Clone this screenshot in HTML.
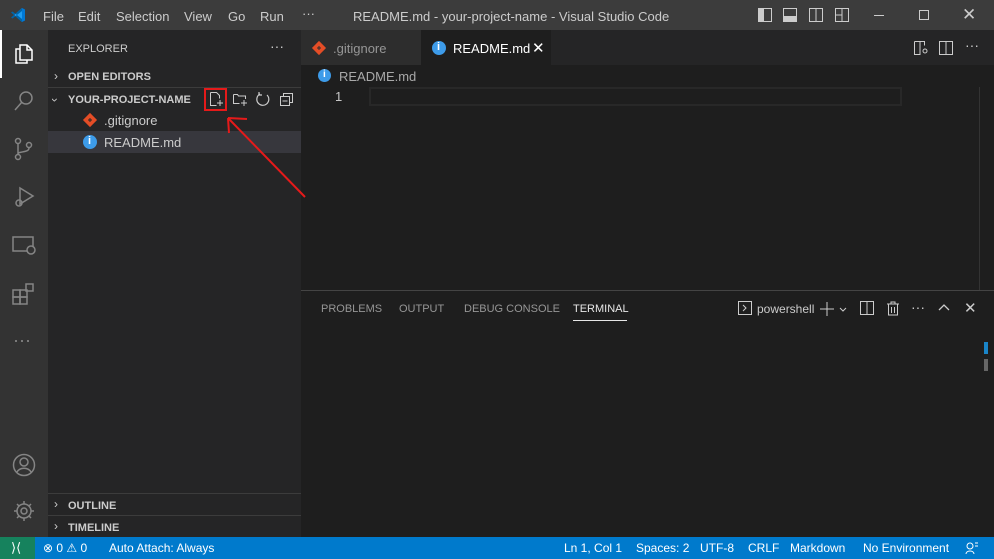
<!DOCTYPE html><html><head><style>
*{margin:0;padding:0;box-sizing:border-box}
body{width:994px;height:559px;overflow:hidden;background:#1e1e1e;font-family:"Liberation Sans",sans-serif;font-size:13px;color:#ccc;position:relative}
.a{position:absolute}
.t{position:absolute;white-space:nowrap}
svg{position:absolute;overflow:visible}
.ib{position:absolute;border-radius:50%;background:#3d9be9}
</style></head><body>
<!-- title bar -->
<div class="a" style="left:0;top:0;width:994px;height:30px;background:#3c3c3c"></div>
<svg style="left:10px;top:7px" width="16" height="16" viewBox="0 0 16 16"><path d="M12 1 L15 2.5 V13.5 L12 15 L4 8 Z" fill="#0078d4"/><path d="M12 1 L4.5 8 L12 15 Z" fill="#1f9cf0"/><path d="M1 5.5 L2.5 4.5 L12 12 V15 Z M1 10.5 L2.5 11.5 L12 4 V1Z" fill="#0065a9"/></svg>
<div class="t" style="left:43px;top:9px;color:#ccc">File</div>
<div class="t" style="left:78px;top:9px">Edit</div>
<div class="t" style="left:116px;top:9px">Selection</div>
<div class="t" style="left:184px;top:9px">View</div>
<div class="t" style="left:228px;top:9px">Go</div>
<div class="t" style="left:260px;top:9px">Run</div>
<div class="t" style="left:302px;top:6px">···</div>
<div class="t" style="left:353px;top:9px">README.md - your-project-name - Visual Studio Code</div>
<svg style="left:758px;top:8px" width="14" height="14"><rect x="0.5" y="0.5" width="13" height="13" fill="none" stroke="#ccc"/><rect x="1" y="1" width="5" height="12" fill="#ccc"/></svg>
<svg style="left:783px;top:8px" width="14" height="14"><rect x="0.5" y="0.5" width="13" height="13" fill="none" stroke="#ccc"/><rect x="1" y="8" width="12" height="5" fill="#ccc"/></svg>
<svg style="left:809px;top:8px" width="14" height="14"><rect x="0.5" y="0.5" width="13" height="13" fill="none" stroke="#ccc"/><line x1="7" y1="1" x2="7" y2="13" stroke="#ccc"/></svg>
<svg style="left:835px;top:8px" width="14" height="14"><rect x="0.5" y="0.5" width="13" height="13" fill="none" stroke="#ccc"/><line x1="7" y1="1" x2="7" y2="13" stroke="#ccc"/><line x1="1" y1="7" x2="7" y2="7" stroke="#ccc"/></svg>
<div class="a" style="left:874px;top:15px;width:10px;height:1px;background:#ccc"></div>
<div class="a" style="left:919px;top:10px;width:10px;height:10px;border:1px solid #ccc"></div>
<div class="t" style="left:962px;top:5px;font-size:17px">✕</div>
<!-- activity bar -->
<div class="a" style="left:0;top:30px;width:48px;height:507px;background:#333"></div>
<div class="a" style="left:0;top:30px;width:2px;height:48px;background:#fff"></div>
<svg style="left:12px;top:42px" width="24" height="24" fill="none" stroke="#fff" stroke-width="1.5"><path d="M8 3h7l5 5v10H8z"/><path d="M15 3v5h5"/><path d="M8 7H4v14h11v-3"/></svg>
<svg style="left:12px;top:89px" width="24" height="24" fill="none" stroke="#858585" stroke-width="1.5"><circle cx="14" cy="9" r="6"/><line x1="10" y1="13" x2="3" y2="21"/></svg>
<svg style="left:12px;top:137px" width="24" height="24" fill="none" stroke="#858585" stroke-width="1.5"><circle cx="6" cy="4" r="2.5"/><circle cx="6" cy="20" r="2.5"/><circle cx="17" cy="8" r="2.5"/><path d="M6 7v10M17 11c0 5-11 3-11 6"/></svg>
<svg style="left:12px;top:185px" width="24" height="24" fill="none" stroke="#858585" stroke-width="1.5"><path d="M8 3l13 8-13 8z"/><circle cx="7" cy="18" r="3"/></svg>
<svg style="left:12px;top:233px" width="24" height="24" fill="none" stroke="#858585" stroke-width="1.5"><rect x="1" y="4" width="20" height="14"/><circle cx="19" cy="17" r="4" fill="#333"/></svg>
<svg style="left:12px;top:282px" width="24" height="24" fill="none" stroke="#858585" stroke-width="1.5"><rect x="1" y="8" width="7" height="7"/><rect x="8" y="8" width="7" height="7"/><rect x="1" y="15" width="7" height="7"/><rect x="8" y="15" width="7" height="7"/><rect x="14" y="2" width="7" height="7"/></svg>
<div class="t" style="left:13px;top:330px;color:#858585;font-size:18px">···</div>
<svg style="left:12px;top:453px" width="24" height="24" fill="none" stroke="#858585" stroke-width="1.5"><circle cx="12" cy="12" r="10.5"/><circle cx="12" cy="9" r="4"/><path d="M5 19c3-5 11-5 14 0"/></svg>
<svg style="left:12px;top:499px" width="24" height="24" fill="none" stroke="#858585" stroke-width="1.5"><circle cx="12" cy="12" r="3"/><path d="M12 2v3M12 19v3M2 12h3M19 12h3M5 5l2 2M17 17l2 2M5 19l2-2M17 7l2-2"/><circle cx="12" cy="12" r="7"/></svg>
<!-- sidebar -->
<div class="a" style="left:48px;top:30px;width:253px;height:507px;background:#252526"></div>
<div class="t" style="left:68px;top:43px;font-size:11px">EXPLORER</div>
<div class="t" style="left:270px;top:38px;font-size:14px">···</div>
<div class="t" style="left:54px;top:69px;font-size:12px">›</div>
<div class="t" style="left:68px;top:71px;font-size:11px;font-weight:bold">OPEN EDITORS</div>
<div class="a" style="left:48px;top:87px;width:253px;height:1px;background:#3c3c3c"></div>
<div class="t" style="left:53px;top:93px;font-size:12px;transform:rotate(90deg)">›</div>
<div class="t" style="left:68px;top:94px;font-size:11px;font-weight:bold">YOUR-PROJECT-NAME</div>
<div class="a" style="left:204px;top:88px;width:23px;height:23px;border:2px solid #e51a1a"></div>
<svg style="left:208px;top:91px" width="16" height="16" fill="none" stroke="#ccc"><path d="M2.5 1.5h6l3 3v3M2.5 1.5v13h6"/><path d="M12 9v6M9 12h6"/></svg>
<svg style="left:232px;top:91px" width="16" height="16" fill="none" stroke="#ccc"><path d="M1.5 3.5h4l1 1.5h7v3M1.5 3.5v9h6"/><path d="M12 9v6M9 12h6"/></svg>
<svg style="left:255px;top:91px" width="16" height="16" fill="none" stroke="#ccc" stroke-width="1.2"><path d="M12 4a6 6 0 1 1-7-1"/><path d="M4 1v3h3"/></svg>
<svg style="left:279px;top:91px" width="16" height="16" fill="none" stroke="#ccc"><rect x="1.5" y="5.5" width="9" height="9"/><path d="M4.5 5.5v-3h9v9h-3"/><path d="M3.5 10h5"/></svg>
<svg style="left:83px;top:113px" width="14" height="14"><rect x="2" y="2" width="10" height="10" transform="rotate(45 7 7)" fill="#e44d26"/><path d="M5 7h4M7 5v4" stroke="#252526"/></svg>
<div class="t" style="left:104px;top:113px">.gitignore</div>
<div class="a" style="left:48px;top:131px;width:253px;height:22px;background:#37373d"></div>
<div class="ib" style="left:83px;top:135px;width:14px;height:14px"></div>
<div class="t" style="left:88px;top:135px;font-size:11px;color:#fff;font-weight:bold">i</div>
<div class="t" style="left:104px;top:135px">README.md</div>
<svg style="left:225px;top:115px" width="80" height="85" fill="none" stroke="#e51a1a" stroke-width="2"><path d="M80 82 L3 3"/><path d="M3 3 L4 18 M3 3 L22 4"/></svg>
<div class="a" style="left:48px;top:493px;width:253px;height:1px;background:#3c3c3c"></div>
<div class="t" style="left:54px;top:497px;font-size:12px">›</div>
<div class="t" style="left:68px;top:500px;font-size:11px;font-weight:bold">OUTLINE</div>
<div class="a" style="left:48px;top:515px;width:253px;height:1px;background:#3c3c3c"></div>
<div class="t" style="left:54px;top:519px;font-size:12px">›</div>
<div class="t" style="left:68px;top:522px;font-size:11px;font-weight:bold">TIMELINE</div>
<!-- tabs -->
<div class="a" style="left:301px;top:30px;width:693px;height:35px;background:#252526"></div>
<div class="a" style="left:301px;top:30px;width:120px;height:35px;background:#2d2d2d"></div>
<svg style="left:312px;top:41px" width="14" height="14"><rect x="2" y="2" width="10" height="10" transform="rotate(45 7 7)" fill="#e44d26"/><path d="M5 7h4M7 5v4" stroke="#2d2d2d"/></svg>
<div class="t" style="left:333px;top:41px;color:#969696">.gitignore</div>
<div class="a" style="left:421px;top:30px;width:130px;height:35px;background:#1e1e1e"></div>
<div class="ib" style="left:432px;top:41px;width:14px;height:14px"></div>
<div class="t" style="left:437px;top:41px;font-size:11px;color:#fff;font-weight:bold">i</div>
<div class="t" style="left:453px;top:41px;color:#fff">README.md</div>
<div class="t" style="left:532px;top:39px;color:#fff;font-size:15px">✕</div>
<svg style="left:913px;top:40px" width="16" height="16" fill="none" stroke="#ccc"><path d="M1.5 1.5h10v4M1.5 1.5v13h6M7 1.5v13"/><circle cx="12" cy="11" r="2"/></svg>
<svg style="left:938px;top:40px" width="16" height="16" fill="none" stroke="#ccc"><rect x="1.5" y="1.5" width="13" height="13"/><line x1="8" y1="1.5" x2="8" y2="14.5"/></svg>
<div class="t" style="left:965px;top:37px;font-size:14px">···</div>
<!-- breadcrumb & editor -->
<div class="ib" style="left:318px;top:69px;width:13px;height:13px"></div>
<div class="t" style="left:323px;top:69px;font-size:10px;color:#fff;font-weight:bold">i</div>
<div class="t" style="left:339px;top:69px;color:#a9a9a9">README.md</div>
<div class="t" style="left:335px;top:89px;color:#c6c6c6">1</div>
<div class="a" style="left:369px;top:87px;width:533px;height:19px;border:2px solid #282828"></div>
<div class="a" style="left:979px;top:87px;width:1px;height:203px;background:#333"></div>
<!-- panel -->
<div class="a" style="left:301px;top:290px;width:693px;height:1px;background:#444"></div>
<div class="t" style="left:321px;top:303px;font-size:11px;color:#969696">PROBLEMS</div>
<div class="t" style="left:399px;top:303px;font-size:11px;color:#969696">OUTPUT</div>
<div class="t" style="left:464px;top:303px;font-size:11px;color:#969696">DEBUG CONSOLE</div>
<div class="t" style="left:573px;top:303px;font-size:11px;color:#e7e7e7">TERMINAL</div>
<div class="a" style="left:573px;top:320px;width:54px;height:1px;background:#e7e7e7"></div>
<svg style="left:738px;top:301px" width="15" height="15" fill="none" stroke="#ccc"><rect x="0.5" y="0.5" width="13" height="13"/><path d="M5 4l3 3-3 3"/></svg>
<div class="t" style="left:757px;top:302px;font-size:12px">powershell</div>
<svg style="left:820px;top:302px" width="28" height="14" fill="none" stroke="#ccc"><path d="M7 0v14M0 7h14"/><path d="M20 6l3 3 3-3"/></svg>
<svg style="left:860px;top:301px" width="15" height="15" fill="none" stroke="#ccc"><rect x="0.5" y="0.5" width="13" height="13"/><line x1="7" y1="0.5" x2="7" y2="13.5"/></svg>
<svg style="left:886px;top:301px" width="14" height="15" fill="none" stroke="#ccc"><path d="M1 3h12M5 3V1h4v2M2.5 3v11h9V3M5.5 6v6M8.5 6v6"/></svg>
<div class="t" style="left:911px;top:299px;font-size:14px">···</div>
<svg style="left:938px;top:303px" width="12" height="8" fill="none" stroke="#ccc" stroke-width="1.3"><path d="M1 7l5-5 5 5"/></svg>
<div class="t" style="left:964px;top:299px;font-size:15px">✕</div>
<div class="a" style="left:984px;top:342px;width:4px;height:12px;background:#1a85c8"></div>
<div class="a" style="left:984px;top:359px;width:4px;height:12px;background:#666"></div>
<!-- status bar -->
<div class="a" style="left:0;top:537px;width:994px;height:22px;background:#007acc"></div>
<div class="a" style="left:0;top:537px;width:35px;height:22px;background:#16825d"></div>
<div class="t" style="left:11px;top:540px;color:#fff;font-size:13px">⟩⟨</div>
<div class="t" style="left:43px;top:541px;color:#fff;font-size:12px">⊗ 0 ⚠ 0</div>
<div class="t" style="left:109px;top:541px;color:#fff;font-size:12px">Auto Attach: Always</div>
<div class="t" style="left:564px;top:541px;color:#fff;font-size:12px">Ln 1, Col 1</div>
<div class="t" style="left:636px;top:541px;color:#fff;font-size:12px">Spaces: 2</div>
<div class="t" style="left:700px;top:541px;color:#fff;font-size:12px">UTF-8</div>
<div class="t" style="left:748px;top:541px;color:#fff;font-size:12px">CRLF</div>
<div class="t" style="left:790px;top:541px;color:#fff;font-size:12px">Markdown</div>
<div class="t" style="left:863px;top:541px;color:#fff;font-size:12px">No Environment</div>
<svg style="left:965px;top:541px" width="14" height="14" fill="none" stroke="#fff"><circle cx="5" cy="5" r="3"/><path d="M1 13c0-4 8-4 8 0M10 2l3 0M10 5l3 0"/></svg>
</body></html>
